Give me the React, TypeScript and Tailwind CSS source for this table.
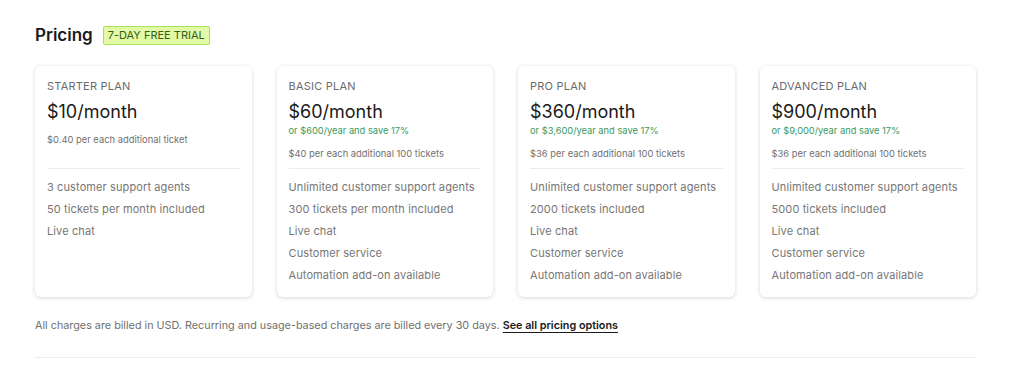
const plans = [
  {
    name: "Starter plan",
    price: "$10/month",
    yearly: null,
    extra: "$0.40 per each additional ticket",
    features: ["3 customer support agents", "50 tickets per month included", "Live chat"],
  },
  {
    name: "Basic plan",
    price: "$60/month",
    yearly: "or $600/year and save 17%",
    extra: "$40 per each additional 100 tickets",
    features: [
      "Unlimited customer support agents",
      "300 tickets per month included",
      "Live chat",
      "Customer service",
      "Automation add-on available",
    ],
  },
  {
    name: "Pro plan",
    price: "$360/month",
    yearly: "or $3,600/year and save 17%",
    extra: "$36 per each additional 100 tickets",
    features: [
      "Unlimited customer support agents",
      "2000 tickets included",
      "Live chat",
      "Customer service",
      "Automation add-on available",
    ],
  },
  {
    name: "Advanced plan",
    price: "$900/month",
    yearly: "or $9,000/year and save 17%",
    extra: "$36 per each additional 100 tickets",
    features: [
      "Unlimited customer support agents",
      "5000 tickets included",
      "Live chat",
      "Customer service",
      "Automation add-on available",
    ],
  },
];

function PlanCard({ plan }: { plan: (typeof plans)[number] }) {
  return (
    <div className="bg-white rounded-md shadow-[0_1px_4px_rgba(0,0,0,0.16)] px-3 pt-3 pb-[11px]">
      {/* Header */}
      <div className="h-[91px] border-b border-[#ececec]">
        <div className="text-[11px] leading-[16px] uppercase tracking-[0.02em] text-[#6b6b6b]">
          {plan.name}
        </div>
        <div className="mt-[6px] text-[18px] leading-[24px] text-[#1a1a1a]">{plan.price}</div>
        {plan.yearly && (
          <div className="text-[9.3px] leading-[14px] text-[#3a9a5e]">{plan.yearly}</div>
        )}
        <div className="mt-[9px] text-[9.4px] leading-[14px] text-[#707070]">{plan.extra}</div>
      </div>

      {/* Features */}
      <ul className="mt-[7px]">
        {plan.features.map((f) => (
          <li key={f} className="text-[11px] leading-[22px] tracking-[0.01em] text-[#767676]">
            {f}
          </li>
        ))}
      </ul>
    </div>
  );
}

export default function App() {
  return (
    <div
      className="min-h-[369px] bg-white"
      style={{ fontFamily: "Inter, 'Noto Sans', sans-serif" }}
    >
      <div className="ml-[35px] w-[941px] pt-[24px]">
        {/* Title */}
        <div className="flex items-center gap-[10px]">
          <h2 className="text-[17px] leading-[22px] font-semibold text-[#1a1a1a]">Pricing</h2>
          <span className="border border-[#a7e25a] bg-[#e2f9a6] rounded-[2px] px-[4px] text-[11px] leading-[17px] text-[#355f17]">
            7-DAY FREE TRIAL
          </span>
        </div>

        {/* Plans */}
        <div className="mt-[20px] grid grid-cols-4 gap-[25px]">
          {plans.map((p) => (
            <PlanCard key={p.name} plan={p} />
          ))}
        </div>

        {/* Footer note */}
        <p className="mt-[21px] text-[10.8px] leading-[16px] text-[#707070]">
          All charges are billed in USD. Recurring and usage-based charges are billed every 30 days.{" "}
          <a href="#" className="font-semibold text-[#1a1a1a] underline underline-offset-[3px] decoration-[1px]">
            See all pricing options
          </a>
        </p>

        <div className="mt-[23px] border-t border-[#ececec]" />
      </div>
    </div>
  );
}
